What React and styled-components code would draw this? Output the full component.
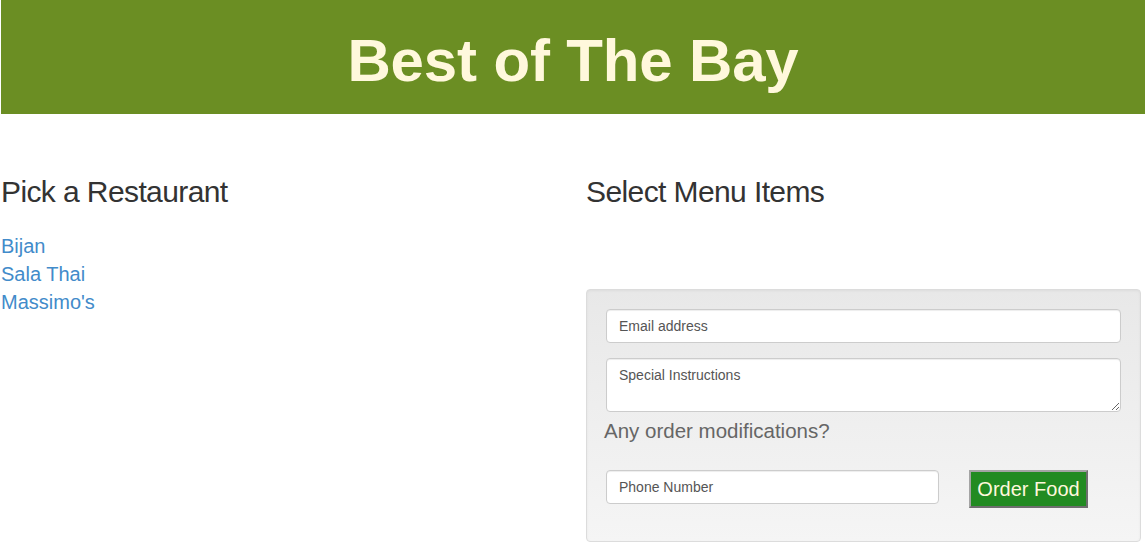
import React from "react";
import styled, { createGlobalStyle } from "styled-components";

const GlobalStyle = createGlobalStyle`
  html, body {
    margin: 0;
    padding: 0;
    background: #fff;
  }
  body {
    font-family: "Liberation Sans", Arial, Helvetica, sans-serif;
    color: #333;
  }
  * {
    box-sizing: border-box;
  }
`;

const Page = styled.div`
  padding-left: 1px;
`;

const Header = styled.header`
  background-color: #6b8e23;
  height: 114px;
  padding-top: 31px;
  text-align: center;
`;

const Title = styled.h1`
  margin: 0;
  font-size: 60px;
  line-height: 60px;
  font-weight: bold;
  letter-spacing: -0.15px;
  color: #fff8dc;
`;

const Columns = styled.div`
  display: grid;
  grid-template-columns: 585px 555px;
  margin-top: 61px;
`;

const Column = styled.section`
  display: flex;
  flex-direction: column;
`;

const Heading = styled.h2`
  margin: 0;
  font-size: 30px;
  line-height: 33px;
  font-weight: normal;
  letter-spacing: -0.6px;
  color: #333;
`;

const RestaurantList = styled.ul`
  list-style: none;
  margin: 24px 0 0;
  padding: 0;
`;

const RestaurantLink = styled.a`
  display: block;
  font-size: 20px;
  line-height: 28px;
  color: #428bca;
  text-decoration: none;
  cursor: pointer;
`;

const Well = styled.form`
  margin-top: 81px;
  padding: 19px;
  border: 1px solid #dcdcdc;
  border-radius: 4px;
  background-image: linear-gradient(to bottom, #e8e8e8 0%, #f5f5f5 100%);
  box-shadow: inset 0 1px 3px rgba(0, 0, 0, 0.05), 0 1px 0 rgba(255, 255, 255, 0.1);
  display: flex;
  flex-direction: column;
  height: 253px;
`;

const fieldStyle = `
  display: block;
  width: 100%;
  padding: 6px 12px;
  font-family: "Liberation Sans", Arial, Helvetica, sans-serif;
  font-size: 14px;
  line-height: 20px;
  color: #555;
  background-color: #fff;
  border: 1px solid #ccc;
  border-radius: 4px;
  box-shadow: inset 0 1px 1px rgba(0, 0, 0, 0.075);
  outline: none;

  &::placeholder {
    color: #555;
    opacity: 1;
  }
`;

const Input = styled.input`
  ${fieldStyle}
  height: 34px;
  width: ${(p) => p.$width || "100%"};
`;

const TextArea = styled.textarea`
  ${fieldStyle}
  height: 54px;
  margin-top: 15px;
  resize: vertical;
`;

const Question = styled.label`
  display: block;
  margin: 5px 0 0 -2px;
  font-size: 20.5px;
  line-height: 27px;
  color: #666;
`;

const SubmitRow = styled.div`
  display: flex;
  align-items: flex-start;
  gap: 30px;
  margin-top: 26px;
`;

const OrderButton = styled.button`
  width: 119px;
  height: 38px;
  padding: 0;
  font-family: "Liberation Sans", Arial, Helvetica, sans-serif;
  font-size: 20px;
  color: #fff8dc;
  background-color: #228b22;
  border: 2px solid;
  border-color: #a4a4a4 #6e6e6e #6e6e6e #a4a4a4;
  cursor: pointer;
`;

const restaurants = ["Bijan", "Sala Thai", "Massimo's"];

export default function App() {
  return (
    <Page>
      <GlobalStyle />
      <Header>
        <Title>Best of The Bay</Title>
      </Header>
      <Columns>
        <Column>
          <Heading>Pick a Restaurant</Heading>
          <RestaurantList>
            {restaurants.map((name) => (
              <li key={name}>
                <RestaurantLink>{name}</RestaurantLink>
              </li>
            ))}
          </RestaurantList>
        </Column>
        <Column>
          <Heading>Select Menu Items</Heading>
          <Well onSubmit={(e) => e.preventDefault()}>
            <Input type="email" placeholder="Email address" />
            <TextArea placeholder="Special Instructions" />
            <Question>Any order modifications?</Question>
            <SubmitRow>
              <Input type="tel" placeholder="Phone Number" $width="333px" />
              <OrderButton type="submit">Order Food</OrderButton>
            </SubmitRow>
          </Well>
        </Column>
      </Columns>
    </Page>
  );
}
